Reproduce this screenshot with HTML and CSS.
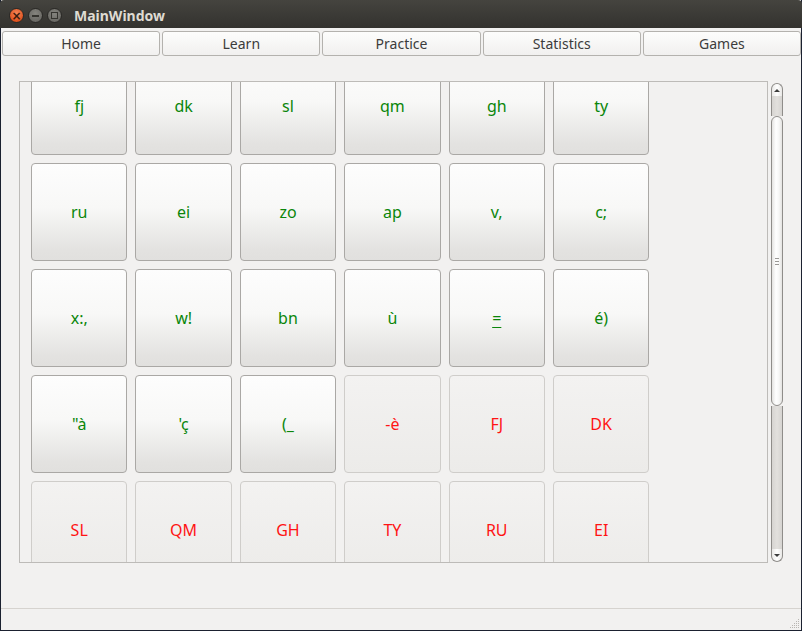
FILE: index.html
```html
<!DOCTYPE html>
<html>
<head>
<meta charset="utf-8">
<link rel="stylesheet" href="styles.css">
</head>
<body>
<div class="window">
  <div class="titlebar">
    <div class="wbtns">
      <span class="wbtn close">×</span>
      <span class="wbtn min"><i class="bar"></i></span>
      <span class="wbtn max"><i class="box"></i></span>
    </div>
    <span class="title">MainWindow</span>
  </div>
  <div class="tabs">
    <div class="tab">Home</div>
    <div class="tab">Learn</div>
    <div class="tab">Practice</div>
    <div class="tab">Statistics</div>
    <div class="tab">Games</div>
  </div>
  <div class="central">
    <div class="scrollarea">
      <div class="viewport">
        <div class="grid">
          <div class="key ok">fj</div><div class="key ok">dk</div><div class="key ok">sl</div><div class="key ok">qm</div><div class="key ok">gh</div><div class="key ok">ty</div>
          <div class="key ok">ru</div><div class="key ok">ei</div><div class="key ok">zo</div><div class="key ok">ap</div><div class="key ok">v,</div><div class="key ok">c;</div>
          <div class="key ok">x:,</div><div class="key ok">w!</div><div class="key ok">bn</div><div class="key ok">ù</div><div class="key ok"><u>=</u></div><div class="key ok">é)</div>
          <div class="key ok">"à</div><div class="key ok">'ç</div><div class="key ok">(_</div><div class="key off">-è</div><div class="key off">FJ</div><div class="key off">DK</div>
          <div class="key off">SL</div><div class="key off">QM</div><div class="key off">GH</div><div class="key off">TY</div><div class="key off">RU</div><div class="key off">EI</div>
        </div>
      </div>
      <div class="vscroll">
        <div class="cap top"><i class="up"></i></div>
        <div class="track pre"></div>
        <div class="handle"><span class="grip"><i></i><i></i><i></i></span></div>
        <div class="track post"></div>
        <div class="cap bottom"><i class="down"></i></div>
      </div>
    </div>
  </div>
  <div class="statusbar">
    <svg class="sizegrip" width="12" height="12" viewBox="0 0 12 12">
      <g fill="#b9b6b2">
        <rect x="10" y="2" width="1" height="1"/>
        <rect x="8" y="4" width="1" height="1"/><rect x="10" y="4" width="1" height="1"/>
        <rect x="6" y="6" width="1" height="1"/><rect x="8" y="6" width="1" height="1"/><rect x="10" y="6" width="1" height="1"/>
        <rect x="4" y="8" width="1" height="1"/><rect x="6" y="8" width="1" height="1"/><rect x="8" y="8" width="1" height="1"/><rect x="10" y="8" width="1" height="1"/>
        <rect x="2" y="10" width="1" height="1"/><rect x="4" y="10" width="1" height="1"/><rect x="6" y="10" width="1" height="1"/><rect x="8" y="10" width="1" height="1"/><rect x="10" y="10" width="1" height="1"/>
      </g>
    </svg>
  </div>
</div>
</body>
</html>
```

FILE: styles.css
```css
html, body {
  margin: 0;
  padding: 0;
}
body {
  background: #1b2130;
  width: 802px;
  height: 631px;
  overflow: hidden;
  font-family: "Noto Sans", "DejaVu Sans", sans-serif;
}
.window {
  margin: 0 1px;
  width: 800px;
  height: 630px;
  background: #f2f1f0;
  display: flex;
  flex-direction: column;
}
.titlebar {
  height: 28px;
  flex: none;
  background: linear-gradient(#45443f, #3a3935 60%, #34332f);
  display: flex;
  align-items: center;
  border-radius: 4px 4px 0 0;
  margin: 0 -1px;
}
.wbtns {
  display: flex;
  gap: 4px;
  margin-left: 9px;
  margin-top: 3px;
}
.wbtn {
  width: 15px;
  height: 15px;
  border-radius: 50%;
  box-sizing: border-box;
  display: flex;
  align-items: center;
  justify-content: center;
}
.close {
  background: radial-gradient(circle at 50% 35%, #f4875a, #e0531f 70%, #c8420f);
  border: 1px solid #2a2926;
  color: #3a1a0a;
  font-size: 12px;
  line-height: 12px;
  font-weight: bold;
  font-family: "DejaVu Sans", sans-serif;
}
.min, .max {
  background: radial-gradient(circle at 50% 35%, #85847e, #6b6a65 70%, #5d5c57);
  border: 1px solid #2a2926;
}
.bar {
  display: block;
  width: 7px;
  height: 2px;
  background: #35342f;
}
.box {
  display: block;
  width: 5px;
  height: 5px;
  border: 1px solid #35342f;
}
.title {
  margin-left: 12px;
  margin-top: 2px;
  color: #dfdbd2;
  font-weight: bold;
  font-size: 14px;
  font-family: "Noto Sans", sans-serif;
}
.tabs {
  margin-top: 3px;
  height: 25px;
  flex: none;
  display: flex;
  gap: 2px;
  padding: 0 0 0 1px;
}
.tab {
  flex: 1;
  box-sizing: border-box;
  border: 1px solid #b4b2ae;
  border-radius: 3px;
  background: linear-gradient(#fdfdfc, #f1f0ef);
  color: #3c3c3c;
  font-size: 14px;
  display: flex;
  align-items: center;
  justify-content: center;
}
.central {
  flex: 1;
  display: flex;
  padding: 25px 17px 45px 18px;
  min-height: 0;
}
.scrollarea {
  flex: 1;
  display: flex;
  gap: 3px;
}
.viewport {
  width: 749px;
  box-sizing: border-box;
  border: 1px solid #bdbbb8;
  overflow: hidden;
  background: #f2f1f0;
}
.grid {
  margin-top: -25px;
  padding-left: 11px;
  display: grid;
  grid-template-columns: repeat(6, 96.4px);
  grid-auto-rows: 98px;
  column-gap: 8px;
  row-gap: 8px;
}
.key {
  box-sizing: border-box;
  border-radius: 4px;
  display: flex;
  align-items: center;
  justify-content: center;
  font-size: 16px;
}
.key.ok {
  border: 1px solid #aaa8a5;
  background: linear-gradient(#fdfdfd 0%, #f8f8f7 45%, #e3e2e0 90%, #e1e0de 100%);
  color: #0a860a;
}
.key.off {
  border: 1px solid #cfcdca;
  background: linear-gradient(#f3f2f1, #ecebe9);
  color: #ff1414;
}
.key u {
  text-underline-offset: 3px;
}
.vscroll {
  width: 12px;
  margin: 2px 0 1px;
  display: flex;
  flex-direction: column;
}
.cap {
  height: 13px;
  flex: none;
  box-sizing: border-box;
  border: 1px solid #8f8d8a;
  background: linear-gradient(90deg, #e9e8e6, #ffffff 50%, #e9e8e6);
  display: flex;
  align-items: center;
  justify-content: center;
}
.cap.top {
  border-radius: 6px 6px 0 0;
  border-bottom: none;
}
.cap.bottom {
  border-radius: 0 0 6px 6px;
  border-top: none;
}
.up {
  width: 0; height: 0;
  border-left: 3px solid transparent;
  border-right: 3px solid transparent;
  border-bottom: 3px solid #3c3c3c;
}
.down {
  width: 0; height: 0;
  border-left: 3px solid transparent;
  border-right: 3px solid transparent;
  border-top: 3px solid #3c3c3c;
}
.track {
  box-sizing: border-box;
  border-left: 1px solid #8f8d8a;
  border-right: 1px solid #8f8d8a;
  background: linear-gradient(90deg, #d6d4d1, #e2e0dd 50%, #d6d4d1);
}
.track.pre {
  height: 20px;
  flex: none;
}
.track.post {
  flex: 1;
}
.handle {
  height: 290px;
  flex: none;
  box-sizing: border-box;
  border: 1px solid #8f8d8a;
  border-radius: 6px;
  background: linear-gradient(90deg, #e4e3e1, #ffffff 40%, #f7f7f6 70%, #e4e3e1);
  display: flex;
  align-items: center;
  justify-content: center;
}
.grip {
  display: flex;
  flex-direction: column;
  gap: 2px;
}
.grip i {
  display: block;
  width: 4px;
  height: 1px;
  background: #9a9895;
}
.statusbar {
  height: 22px;
  flex: none;
  box-sizing: border-box;
  border-top: 1px solid #d6d3cf;
  display: flex;
  justify-content: flex-end;
  align-items: flex-end;
}
.sizegrip {
  display: block;
  margin: 0 1px 1px 0;
}
```
